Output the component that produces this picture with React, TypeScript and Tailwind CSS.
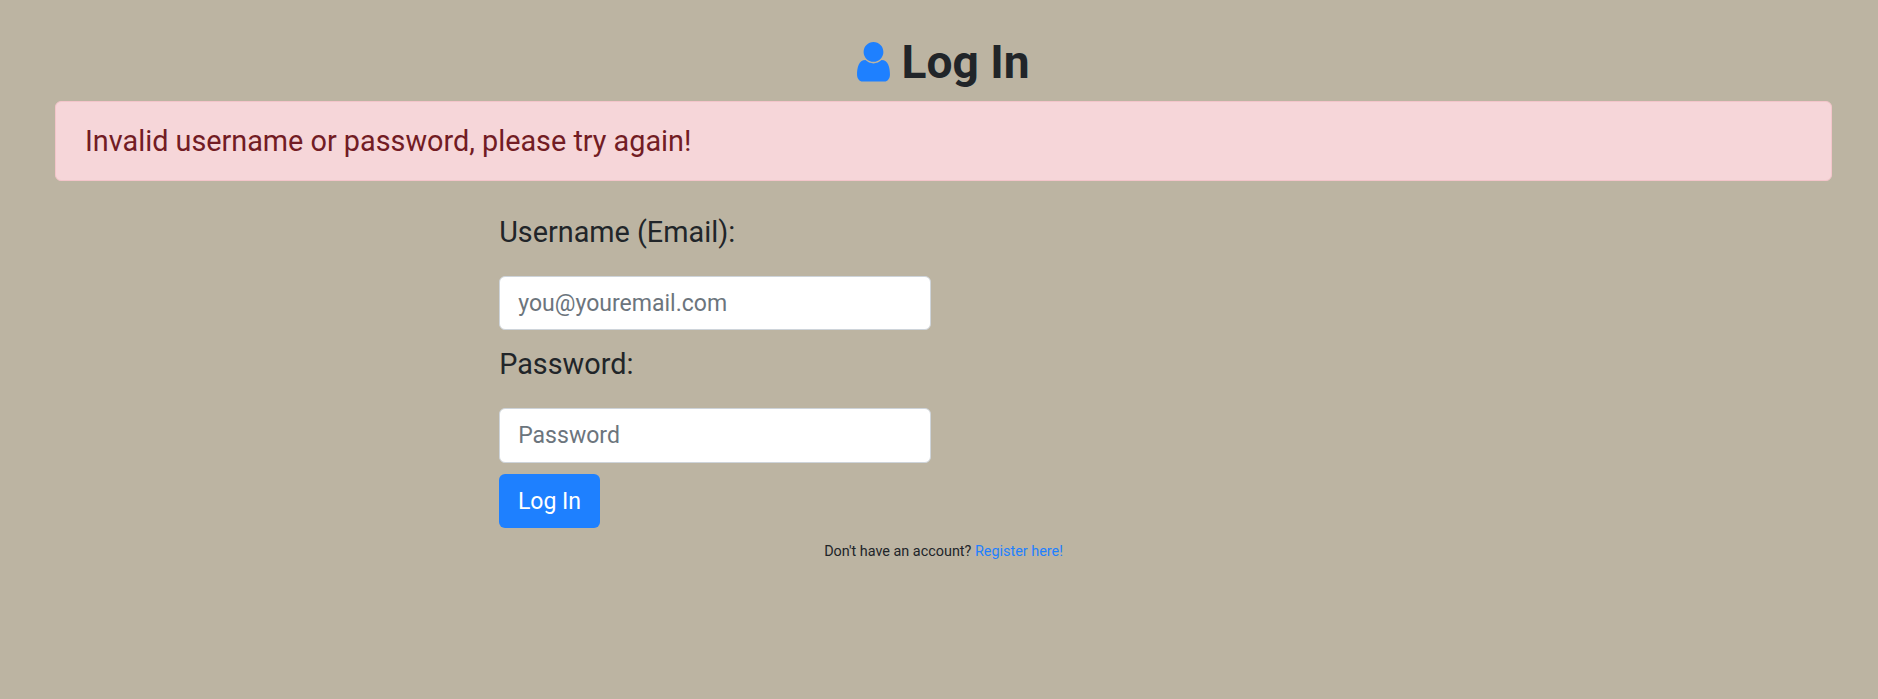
import React from "react";

function UserIcon() {
  return (
    <svg viewBox="0 0 1280 1536" className="h-[39.5px] w-[33px]" fill="#1e80ff">
      <path d="M1280 1271C1280 1417 1184 1536 1067 1536H213C96 1536 0 1417 0 1271C0 1008 65 704 327 704C408 783 518 832 640 832C762 832 872 783 953 704C1215 704 1280 1008 1280 1271ZM1024 384C1024 596 852 768 640 768C428 768 256 596 256 384C256 172 428 0 640 0C852 0 1024 172 1024 384Z" />
    </svg>
  );
}

export default function App() {
  return (
    <div className="min-h-[699px] bg-[#bcb4a2] pt-[34px] pr-[46px] pl-[55px] font-['Roboto',sans-serif] text-[#212529]">
      <h1 className="mb-[11px] flex h-[56px] items-center justify-center gap-[11.2px] text-[46.08px] leading-[56px] font-bold">
        <UserIcon />
        Log In
      </h1>
      <div className="flex h-[80px] items-center rounded-[6px] border border-[#f3c5ca] bg-[#f6d6d9] px-[29px] pt-[2px] text-[28.8px] text-[#721c24]">
        Invalid username or password, please try again!
      </div>
      <form className="ml-[444.2px] flex w-[431.7px] flex-col items-start pt-8">
        <label className="mb-6 text-[28.8px] leading-[39px]">Username (Email):</label>
        <input className="h-[54px] w-full rounded-[6px] border border-[#ced4da] bg-white px-[18px] text-[23.04px] placeholder:text-[#6c757d]" placeholder="you@youremail.com" />
        <label className="mt-[15px] mb-6 text-[28.8px] leading-[39px]">Password:</label>
        <input type="password" className="h-[54.5px] w-full rounded-[6px] border border-[#ced4da] bg-white px-[18px] text-[23.04px] placeholder:text-[#6c757d]" placeholder="Password" />
        <button type="button" className="mt-[11.5px] h-[54px] rounded-[6px] bg-[#1e80ff] px-[18.7px] pt-[2px] text-[23.04px] text-white">Log In</button>
      </form>
      <p className="mt-[13px] text-center text-[14.4px] leading-[22px]">
        Don't have an account? <a className="text-[#1e80ff]" href="#">Register here!</a>
      </p>
    </div>
  );
}
